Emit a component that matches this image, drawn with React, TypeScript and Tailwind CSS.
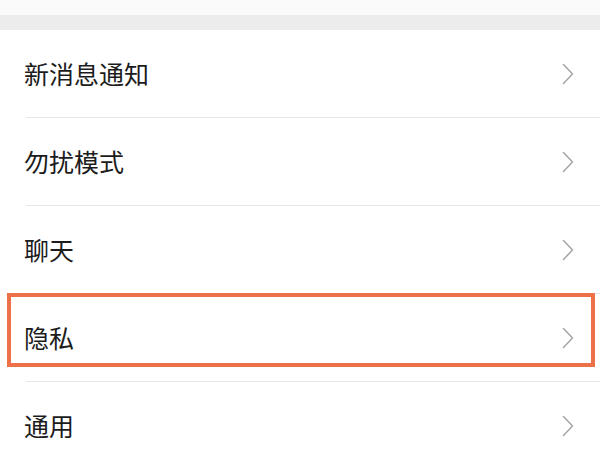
import { ReactNode } from "react";

const items = ["新消息通知", "勿扰模式", "聊天", "隐私", "通用"];

function Chevron() {
    return (
        <svg width="12" height="22" viewBox="0 0 12 22" fill="none" className="text-[#a8a8a8]">
            <path d="M1.5 1.5 L10.5 11 L1.5 20.5" stroke="currentColor" strokeWidth="1.6" strokeLinecap="round" strokeLinejoin="round" />
        </svg>
    );
}

function Row({ label, children }: { label: string; children?: ReactNode }) {
    return (
        <div className="relative h-[88px] pl-[26px]">
            <div className="flex h-full items-center justify-between border-b border-[#e6e6e6] pr-[26px]">
                <span className="-ml-[2px] text-[25px] leading-none text-[#1c1c1c]">{label}</span>
                <Chevron />
            </div>
            {children}
        </div>
    );
}

export default function App() {
    return (
        <div className="h-[450px] w-[600px] overflow-hidden bg-white font-['Noto_Sans_CJK_SC','Noto_Sans',sans-serif]">
            <div className="h-[15px] bg-[#fafafa]" />
            <div className="h-[15px] bg-[#ececec]" />
            {items.map((label) => (
                <Row key={label} label={label}>
                    {/* highlight box over the privacy row */}
                    {label === "隐私" && (
                        <div className="absolute left-[7px] top-[-1px] h-[74px] w-[588px] border-4 border-[#ee7049]" />
                    )}
                </Row>
            ))}
        </div>
    );
}
